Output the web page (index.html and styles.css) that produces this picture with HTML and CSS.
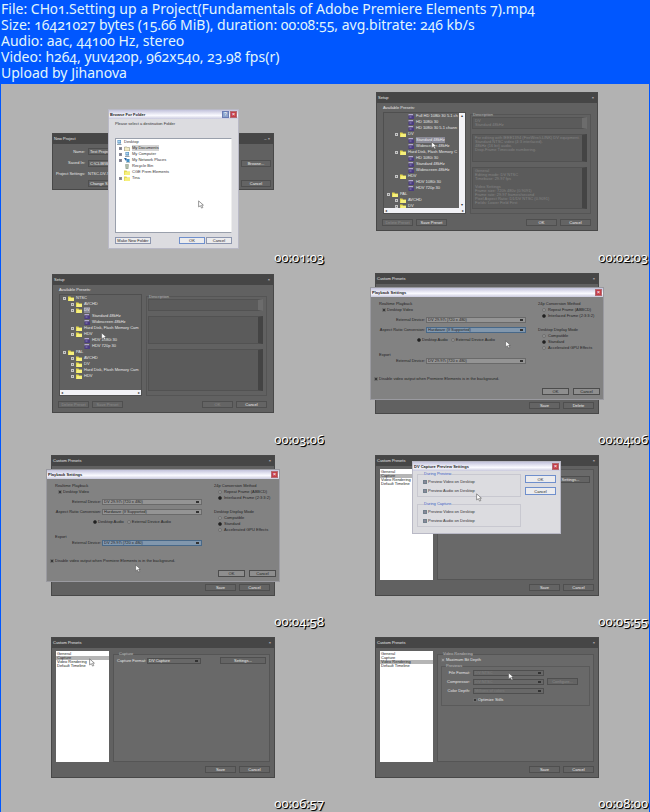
FILE: index.html
```html
<!DOCTYPE html>
<html lang="en">
<head>
<meta charset="utf-8">
<title>CH01.Setting up a Project</title>
<link rel="stylesheet" href="styles.css">
</head>
<body>
<svg width="0" height="0" class="defs" aria-hidden="true">
  <symbol id="folder" viewBox="0 0 12 10"><path d="M0 1h5l1 2h6v7H0z" fill="#e4d850"/><path d="M2 4h10v6H1z" fill="#f6f07c"/></symbol>
  <symbol id="paper" viewBox="0 0 12 10"><path d="M1 2h5l1 1h4v7H1z" fill="#f2ecc4" stroke="#8a8468"/></symbol>
  <symbol id="computer" viewBox="0 0 12 10"><path d="M3 0h7v7H3z" fill="#4f86b8"/><path d="M4 1h5v4H4z" fill="#a8d4ee"/><path d="M2 8h9v2H2z" fill="#97a4aa"/></symbol>
  <symbol id="network" viewBox="0 0 12 10"><path d="M5 2h6v6H5z" fill="#3f8fc4"/><path d="M0 0h5v5H3z" fill="#265fa0"/><path d="M4 9h8v1H4z" fill="#70868e"/></symbol>
  <symbol id="bin" viewBox="0 0 12 10"><path d="M3 1h6l-1 9H4z" fill="#b5c2b0" stroke="#7d8c7b"/></symbol>
  <symbol id="clip" viewBox="0 0 12 10"><path d="M1 0h9v3H1z" fill="#b3a9d0"/><path d="M1 3h11v7H1z" fill="#4b3d80"/><path d="M3 5h4v2H3z" fill="#8d80bd"/></symbol>
  <symbol id="pointer" viewBox="0 0 10 14"><path d="M1 1v10l3-2 2 4 2-1-2-4h3z" fill="#fff" stroke="#555"/></symbol>
</svg>

<header class="info">
  <p>File: CH01.Setting up a Project(Fundamentals of Adobe Premiere Elements 7).mp4</p>
  <p>Size: 16421027 bytes (15.66 MiB), duration: 00:08:55, avg.bitrate: 246 kb/s</p>
  <p>Audio: aac, 44100 Hz, stereo</p>
  <p>Video: h264, yuv420p, 962x540, 23.98 fps(r)</p>
  <p>Upload by Jihanova</p>
</header>

<main class="sheet">
  <section class="shot">
    <div class="window project">
      <div class="bar"><span>New Project</span><span>– ×</span></div>
      <div class="project-form">
        <label for="name">Name:</label><input id="name" value="Test Project"><span></span>
        <label for="saved">Saved In:</label><input id="saved" value="C:\CLIB\Work"><button>Browse...</button>
        <span class="right">Project Settings:</span><span>NTSC-DV-S</span><span></span>
        <span></span><button class="change">Change S</button><button>Cancel</button>
      </div>
    </div>
    <div class="window light browse">
      <div class="bar"><b>Browse For Folder</b><span class="keys"><button class="help" aria-label="Help">?</button><button class="close" aria-label="Close">×</button></span></div>
      <div class="browse-body">
        <p>Please select a destination Folder</p>
        <ul class="tree places">
          <li><svg><use href="#computer"/></svg>Desktop</li>
          <li class="l1"><i></i><svg><use href="#paper"/></svg><mark>My Documents</mark></li>
          <li class="l1"><i></i><svg><use href="#computer"/></svg>My Computer</li>
          <li class="l1"><i></i><svg><use href="#network"/></svg>My Network Places</li>
          <li class="l1"><i class="none"></i><svg><use href="#bin"/></svg>Recycle Bin</li>
          <li class="l1"><i class="none"></i><svg><use href="#folder"/></svg>CGE Prem Elements</li>
          <li class="l1"><i></i><svg><use href="#folder"/></svg>Tina</li>
        </ul>
        <div class="actions"><button class="wide">Make New Folder</button><button class="default">OK</button><button>Cancel</button></div>
      </div>
    </div>
    <svg class="pointer p1"><use href="#pointer"/></svg>
    <time>00:01:03</time>
  </section>

  <section class="shot">
    <div class="window setup">
      <div class="bar"><span>Setup</span><span>×</span></div>
      <div class="setup-body">
        <p>Available Presets:</p>
        <div class="panes">
          <div class="presets both">
            <ul class="tree">
              <li class="l3"><svg><use href="#clip"/></svg>Full HD 1080i 30 5.1 ch</li>
              <li class="l3"><svg><use href="#clip"/></svg>HD 1080i 30</li>
              <li class="l3"><svg><use href="#clip"/></svg>HD 1080i 30 5.1 chann</li>
              <li class="l2"><i></i><svg><use href="#folder"/></svg>DV</li>
              <li class="l3"><svg><use href="#clip"/></svg><mark>Standard 48kHz</mark></li>
              <li class="l3"><svg><use href="#clip"/></svg>Widescreen 48kHz</li>
              <li class="l2"><i></i><svg><use href="#folder"/></svg>Hard Disk, Flash Memory C</li>
              <li class="l3"><svg><use href="#clip"/></svg>HD 1080i 30</li>
              <li class="l3"><svg><use href="#clip"/></svg>Standard 48kHz</li>
              <li class="l3"><svg><use href="#clip"/></svg>Widescreen 48kHz</li>
              <li class="l2"><i></i><svg><use href="#folder"/></svg>HDV</li>
              <li class="l3"><svg><use href="#clip"/></svg>HDV 1080i 30</li>
              <li class="l3"><svg><use href="#clip"/></svg>HDV 720p 30</li>
              <li class="l1"><i></i><svg><use href="#folder"/></svg>PAL</li>
              <li class="l2"><i></i><svg><use href="#folder"/></svg>AVCHD</li>
              <li class="l2"><i></i><svg><use href="#folder"/></svg>DV</li>
            </ul>
            <div class="vscroll"><span>▴</span><span>▾</span></div>
            <div class="hscroll"><span>◂</span><span>▸</span></div>
          </div>
          <fieldset class="description"><legend>Description</legend>
            <div class="memo short pale">DV<br>Standard 48kHz</div>
            <div class="memo mid">For editing with IEEE1394 (FireWire/i.LINK) DV equipment.<br>Standard NTSC video (4:3 interlaced).<br>48kHz (16 bit) audio.<br>Drop-Frame Timecode numbering.</div>
            <div class="memo tall low">General<br>Editing mode: DV NTSC<br>Timebase: 29.97 fps<br><br>Video Settings<br>Frame size: 720h 480v (0.9091)<br>Frame rate: 29.97 frames/second<br>Pixel Aspect Ratio: D1/DV NTSC (0.9091)<br>Fields: Lower Field First</div>
          </fieldset>
        </div>
        <div class="actions"><button disabled>Delete Preset</button><button>Save Preset</button><button class="push">OK</button><button>Cancel</button></div>
      </div>
    </div>
    <svg class="pointer p2"><use href="#pointer"/></svg>
    <time>00:02:03</time>
  </section>

  <section class="shot">
    <div class="window setup">
      <div class="bar"><span>Setup</span><span>×</span></div>
      <div class="setup-body">
        <p>Available Presets:</p>
        <div class="panes">
          <div class="presets">
            <ul class="tree">
              <li class="l1"><i></i><svg><use href="#folder"/></svg>NTSC</li>
              <li class="l2"><i></i><svg><use href="#folder"/></svg>AVCHD</li>
              <li class="l2"><i></i><svg><use href="#folder"/></svg><mark>DV</mark></li>
              <li class="l3"><svg><use href="#clip"/></svg>Standard 48kHz</li>
              <li class="l3"><svg><use href="#clip"/></svg>Widescreen 48kHz</li>
              <li class="l2"><i></i><svg><use href="#folder"/></svg>Hard Disk, Flash Memory Cam</li>
              <li class="l2"><i></i><svg><use href="#folder"/></svg>HDV</li>
              <li class="l3"><svg><use href="#clip"/></svg>HDV 1080i 30</li>
              <li class="l3"><svg><use href="#clip"/></svg>HDV 720p 30</li>
              <li class="l1"><i></i><svg><use href="#folder"/></svg>PAL</li>
              <li class="l2"><i></i><svg><use href="#folder"/></svg>AVCHD</li>
              <li class="l2"><i></i><svg><use href="#folder"/></svg>DV</li>
              <li class="l2"><i></i><svg><use href="#folder"/></svg>Hard Disk, Flash Memory Cam</li>
              <li class="l2"><i></i><svg><use href="#folder"/></svg>HDV</li>
            </ul>
            <div class="hscroll"><span>◂</span><span>▸</span></div>
          </div>
          <fieldset class="description"><legend>Description</legend>
            <div class="memo short pale"></div>
            <div class="memo mid"></div>
            <div class="memo tall"></div>
          </fieldset>
        </div>
        <div class="actions"><button disabled>Delete Preset</button><button disabled>Save Preset</button><button class="push" disabled>OK</button><button>Cancel</button></div>
      </div>
    </div>
    <svg class="pointer p3"><use href="#pointer"/></svg>
    <time>00:03:06</time>
  </section>

  <section class="shot">
    <div class="window custom">
      <div class="bar"><span>Custom Presets</span><span>×</span></div>
      <div class="custom-body"><div class="actions end"><button>Save</button><button>Delete</button></div></div>
    </div>
    <div class="window grey playback">
      <div class="bar"><b>Playback Settings</b><button class="close" aria-label="Close">×</button></div>
      <div class="playback-body">
        <div class="cols">
          <div class="devices">
            <h2>Realtime Playback</h2>
            <label class="in"><input type="checkbox" checked>Desktop Video</label>
            <div class="pick"><label for="a1">External Device:</label><select id="a1"><option>DV 29.97i (720 x 480)</option></select></div>
            <div class="pick"><label for="a2">Aspect Ratio Conversion:</label><select id="a2" class="on"><option>Hardware (If Supported)</option></select></div>
            <div class="audio"><label><input type="radio" name="aud4" checked>Desktop Audio</label><label><input type="radio" name="aud4">External Device Audio</label></div>
            <h2 class="export">Export</h2>
            <div class="pick"><label for="a3">External Device:</label><select id="a3"><option>DV 29.97i (720 x 480)</option></select></div>
          </div>
          <div class="modes">
            <h2>24p Conversion Method</h2>
            <label><input type="radio" name="m4">Repeat Frame (ABBCD)</label>
            <label><input type="radio" name="m4" checked>Interlaced Frame (2:3:3:2)</label>
            <h2 class="second">Desktop Display Mode</h2>
            <label><input type="radio" name="d4">Compatible</label>
            <label><input type="radio" name="d4" checked>Standard</label>
            <label><input type="radio" name="d4">Accelerated GPU Effects</label>
          </div>
        </div>
        <label class="off"><input type="checkbox" checked>Disable video output when Premiere Elements is in the background.</label>
        <div class="actions end"><button>OK</button><button>Cancel</button></div>
      </div>
    </div>
    <svg class="pointer p4"><use href="#pointer"/></svg>
    <time>00:04:06</time>
  </section>

  <section class="shot">
    <div class="window custom">
      <div class="bar"><span>Custom Presets</span><span>×</span></div>
      <div class="custom-body"><div class="actions end"><button>Save</button><button>Cancel</button></div></div>
    </div>
    <div class="window grey playback">
      <div class="bar"><b>Playback Settings</b><button class="close" aria-label="Close">×</button></div>
      <div class="playback-body">
        <div class="cols">
          <div class="devices">
            <h2>Realtime Playback</h2>
            <label class="in"><input type="checkbox" checked>Desktop Video</label>
            <div class="pick"><label for="b1">External Device:</label><select id="b1"><option>DV 29.97i (720 x 480)</option></select></div>
            <div class="pick"><label for="b2">Aspect Ratio Conversion:</label><select id="b2"><option>Hardware (If Supported)</option></select></div>
            <div class="audio"><label><input type="radio" name="aud5" checked>Desktop Audio</label><label><input type="radio" name="aud5">External Device Audio</label></div>
            <h2 class="export">Export</h2>
            <div class="pick"><label for="b3">External Device:</label><select id="b3" class="on"><option>DV 29.97i (720 x 480)</option></select></div>
          </div>
          <div class="modes">
            <h2>24p Conversion Method</h2>
            <label><input type="radio" name="m5">Repeat Frame (ABBCD)</label>
            <label><input type="radio" name="m5" checked>Interlaced Frame (2:3:3:2)</label>
            <h2 class="second">Desktop Display Mode</h2>
            <label><input type="radio" name="d5">Compatible</label>
            <label><input type="radio" name="d5" checked>Standard</label>
            <label><input type="radio" name="d5">Accelerated GPU Effects</label>
          </div>
        </div>
        <label class="off"><input type="checkbox" checked>Disable video output when Premiere Elements is in the background.</label>
        <div class="actions end"><button>OK</button><button>Cancel</button></div>
      </div>
    </div>
    <svg class="pointer p5"><use href="#pointer"/></svg>
    <time>00:04:58</time>
  </section>

  <section class="shot">
    <div class="window custom">
      <div class="bar"><span>Custom Presets</span><span>×</span></div>
      <div class="custom-body">
        <div class="split">
          <ul class="sections"><li>General</li><li class="sel">Capture</li><li>Video Rendering</li><li>Default Timeline</li></ul>
          <div class="panel covered"><button>Settings...</button></div>
        </div>
        <div class="actions end"><button>Save</button><button>Cancel</button></div>
      </div>
    </div>
    <div class="window light preview">
      <div class="bar"><b>DV Capture Preview Settings</b><button class="close" aria-label="Close">×</button></div>
      <div class="preview-body">
        <div class="groups">
          <fieldset><legend>During Preview</legend>
            <label><input type="checkbox" checked>Preview Video on Desktop</label>
            <label><input type="checkbox" checked>Preview Audio on Desktop</label>
          </fieldset>
          <fieldset><legend>During Capture</legend>
            <label><input type="checkbox" checked>Preview Video on Desktop</label>
            <label><input type="checkbox" checked>Preview Audio on Desktop</label>
          </fieldset>
        </div>
        <div class="stack"><button class="default">OK</button><button class="default">Cancel</button></div>
      </div>
    </div>
    <svg class="pointer p6"><use href="#pointer"/></svg>
    <time>00:05:55</time>
  </section>

  <section class="shot">
    <div class="window custom">
      <div class="bar"><span>Custom Presets</span><span>×</span></div>
      <div class="custom-body">
        <div class="split">
          <ul class="sections"><li>General</li><li class="sel">Capture</li><li>Video Rendering</li><li>Default Timeline</li></ul>
          <fieldset class="panel"><legend>Capture</legend>
            <div class="format"><label for="e1">Capture Format:</label><select id="e1"><option>DV Capture</option></select><button>Settings...</button></div>
          </fieldset>
        </div>
        <div class="actions end"><button>Save</button><button>Cancel</button></div>
      </div>
    </div>
    <svg class="pointer p7"><use href="#pointer"/></svg>
    <time>00:06:57</time>
  </section>

  <section class="shot">
    <div class="window custom">
      <div class="bar"><span>Custom Presets</span><span>×</span></div>
      <div class="custom-body">
        <div class="split">
          <ul class="sections"><li>General</li><li>Capture</li><li class="sel">Video Rendering</li><li>Default Timeline</li></ul>
          <fieldset class="panel"><legend>Video Rendering</legend>
            <label class="depth"><input type="checkbox">Maximum Bit Depth</label>
            <fieldset class="previews"><legend>Previews</legend>
              <div class="render">
                <label for="f1">File Format:</label><select id="f1" class="dim"><option>DV NTSC</option></select><span></span>
                <label for="f2">Compressor:</label><select id="f2" class="dim"><option>DV NTSC</option></select><button disabled>Configure...</button>
                <label for="f3">Color Depth:</label><select id="f3" class="dim"><option>Millions of colors</option></select><span></span>
                <span></span><label class="still"><input type="checkbox" checked>Optimize Stills</label><span></span>
              </div>
            </fieldset>
          </fieldset>
        </div>
        <div class="actions end"><button>Save</button><button>Cancel</button></div>
      </div>
    </div>
    <svg class="pointer p8"><use href="#pointer"/></svg>
    <time>00:08:00</time>
  </section>
</main>
</body>
</html>
```
FILE: styles.css
```css
* { box-sizing: border-box; }
body { margin: 0; background: #0057ff; min-height: 100vh; font-family: "Liberation Sans Narrow", "Liberation Sans", sans-serif; }
.defs { position: absolute; }
p, h2, ul, li, fieldset, legend { margin: 0; padding: 0; font: inherit; list-style: none; }
fieldset { min-width: 0; }

.info { padding: 1px 1px 3px; color: #e2f6fb; font-family: "Noto Sans", sans-serif; font-size: 14px; line-height: 16px; font-variant-numeric: oldstyle-nums; white-space: nowrap; }

.sheet { display: grid; grid-template-columns: 1fr 1fr; grid-auto-rows: 182px; padding: 0 1px; }
.shot { position: relative; overflow: hidden; background: #b2b2b2; font-size: 4px; line-height: 6px; color: #e6e6e6; }
.shot time { position: absolute; right: 1px; bottom: 0; color: #fff; font: 13px/18px "Noto Sans", sans-serif; font-variant-numeric: oldstyle-nums; text-shadow: 1px 1px 1px #000, 1px 1px 0 #222; }

/* Windows */
.window { position: absolute; display: flex; flex-direction: column; border: 1px solid #484848; background: #616161; white-space: nowrap; }
.bar { display: flex; justify-content: space-between; align-items: center; height: 10px; padding: 0 3px 0 1px; background: #464646; }
.project { left: 51px; top: 49px; width: 222px; height: 57px; }
.browse { left: 107px; top: 25px; width: 131px; height: 140px; }
.setup { left: 51px; top: 8px; width: 222px; height: 139px; }
.custom { left: 50px; top: 7px; width: 224px; height: 141px; }
.playback { left: 45px; top: 21px; width: 234px; height: 113px; }
.preview { left: 87px; top: 13px; width: 149px; height: 73px; }
.light { border-color: #b9b9c6; background: #dcdce0; color: #333; }
.grey { border-color: #9a9aa0; background: #828282; color: #222; }
.light .bar, .grey .bar { height: 9px; padding: 0 1px; background: linear-gradient(#c3c3dc, #fafaff 60%, #c9c9dd); color: #222; }

/* Controls */
button, input, select { margin: 0; border: 1px solid #4f4f4f; padding: 0 1px; background: #646464; color: #eee; font: inherit; line-height: 5px; height: 7px; min-width: 0; border-radius: 0; }
button:disabled { color: #8c8c8c; opacity: 1; }
select { appearance: none; height: 6px; line-height: 4px; background: linear-gradient(90deg, #333, #333) right 2px center / 3px 2px no-repeat, #686868; }
select.dim { color: #7c7c7c; }
input[type="checkbox"], input[type="radio"] { appearance: none; flex: none; width: 4px; height: 4px; padding: 0; border: 1px solid #707070; background: #989898; }
input[type="radio"] { border-radius: 50%; }
input[type="checkbox"]:checked { background: #383838; }
input[type="radio"]:checked { background: #161616; border-color: #3c3c3c; }
label { display: flex; align-items: center; gap: 1px; }
.light button { border-color: #8d96ae; background: #ececee; color: #222; }
.light button.default { border-color: #6f8fcc; }
.grey button { border-color: #4c4c4c; background: #8e8e8e; color: #222; }
.grey select { border-color: #6a6a6a; background-color: #949494; color: #222; }
.grey select.on { border-color: #486888; background-color: #8197ad; }
.window .keys { display: flex; gap: 1px; }
.window .close, .window .help { width: 7px; height: 7px; padding: 0; border-color: #b46a70; background: #c43c48; color: #fff; font-size: 6px; }
.window .help { border-color: #6a7cb4; background: #8ea4cc; font-size: 5px; }
.actions { display: flex; gap: 3px; }
.actions button { width: 31px; }
.actions .push { margin-left: auto; }
.end { justify-content: flex-end; }

/* New project */
.project-form { display: grid; grid-template-columns: 31px 1fr 30px; grid-template-rows: 11px 10px 9px 8px; gap: 1px 3px; align-items: center; padding: 2px 2px 0 1px; }
.project-form label, .right { justify-content: flex-end; text-align: right; }
.change { text-align: left; }

/* Folder dialog */
.browse-body { padding: 2px 6px 0; }
.browse-body p { height: 17px; }
.places { height: 95px; margin-bottom: 4px; border: 1px solid #9aa0ac; border-right-color: #eee; background: #fff; }
.places mark { background: #d4d4d4; color: #222; }
.browse .wide { width: 36px; margin-right: auto; }
.browse .actions button:not(.wide) { width: 26px; }
.browse .actions { gap: 1px; }

/* Trees */
.tree { overflow: hidden; min-width: 0; }
.tree li { display: flex; align-items: center; gap: 2px; height: 6px; }
.tree svg { flex: none; width: 6px; height: 5px; }
.tree i { flex: none; width: 3px; height: 3px; border: 1px solid #c4c4c4; background: #777; }
.tree .none { visibility: hidden; }
.places .l1 { padding-left: 3px; }
.places .l1 i { border-color: #8b8b9b; }
mark { background: #8a8a96; color: #eee; }
.presets .l1 { padding-left: 3px; }
.presets .l2 { padding-left: 11px; }
.presets .l3 { padding-left: 24px; }

/* Setup */
.setup-body { padding: 2px 6px 0 5px; }
.setup-body > p { padding-left: 1px; }
.panes { display: flex; gap: 4px; height: 102px; margin: 1px 0 5px; }
.presets { display: grid; grid-template-columns: 1fr auto; grid-template-rows: 1fr 5px; flex: none; width: 83px; height: 102px; margin-left: 1px; border: 1px solid #4f4f4f; }
.vscroll, .hscroll { display: flex; justify-content: space-between; background: #f2f2f6; color: #333; }
.vscroll { flex-direction: column; align-items: center; width: 6px; }
.hscroll { grid-column: 1 / -1; align-items: center; padding: 0 1px; }
.description { flex: 1; display: flex; flex-direction: column; border: 1px solid #555; padding: 0 3px 2px 1px; color: #b0b0b0; }
.description legend { margin-left: 1px; line-height: 5px; }
.memo { flex: none; overflow: hidden; border: 1px solid #525252; border-right: 5px solid #444; background: #5b5b5b; color: #848484; line-height: 4px; padding: 1px 2px; margin-bottom: 5px; }
.memo.pale { border-right-color: #6c6c6c; }
.short { height: 12px; }
.mid { height: 28px; }
.tall { height: 42px; margin-bottom: 0; }

/* Playback */
.playback-body { padding: 4px 3px 0; }
.cols { display: flex; gap: 12px; height: 75px; padding: 0 5px; }
.devices { width: 147px; }
.in { padding-left: 3px; margin-bottom: 4px; }
.pick { display: grid; grid-template-columns: 46px 1fr; gap: 1px; margin-bottom: 4px; }
.pick label { justify-content: flex-end; }
.audio { display: flex; gap: 3px; padding-left: 38px; }
.export { margin-top: 9px; }
.modes label { padding-left: 4px; gap: 2px; }
.second { margin-top: 8px; }
.playback .actions { gap: 4px; margin-top: 6px; }
.playback .actions button { width: 27px; }

/* Custom presets */
.custom-body { display: flex; flex-direction: column; flex: 1; justify-content: flex-end; gap: 4px; padding: 3px 4px 4px; }
.split { display: flex; gap: 4px; height: 111px; }
.sections { width: 53px; padding: 1px 0; background: #fff; color: #222; line-height: 4px; }
.sections li { height: 4px; padding-left: 1px; }
.sel { background: #b5b5b5; }
.panel { flex: 1; border: 1px solid #555; padding: 0 3px; background: #696969; }
.panel legend { margin-left: 2px; color: #b8b8b8; }
.covered { display: flex; align-items: flex-start; justify-content: flex-end; padding-top: 6px; }
.covered button { width: 46px; padding-left: 8px; }
.format { display: grid; grid-template-columns: 29px 54px 1fr; align-items: center; gap: 1px; }
.format button { justify-self: end; width: 46px; }
.previews { border: 1px solid #5a5a5a; padding: 0 2px; }
.render { display: grid; grid-template-columns: 26px 71px 31px; grid-auto-rows: 7px; gap: 2px 3px; align-items: center; padding-bottom: 2px; }
.render > label:not(.still) { justify-content: flex-end; }

/* Capture preview */
.preview-body { display: flex; gap: 4px; padding: 0 4px; }
.groups { flex: 1; display: flex; flex-direction: column; gap: 4px; }
.groups fieldset { border: 1px solid #c8c8d0; padding: 0 5px 1px; }
.groups legend { margin-left: 1px; color: #3a5cc4; }
.groups label { height: 9px; }
.groups input { border-color: #71808c; background: #eee; }
.groups input:checked { background: #889; }
.stack { display: flex; flex-direction: column; gap: 4px; padding-top: 4px; }
.stack button { width: 31px; height: 8px; }

/* Pointers */
.pointer { position: absolute; width: 6px; height: 9px; }
.p1 { left: 197px; top: 116px; }
.p2 { left: 106px; top: 57px; }
.p3 { left: 100px; top: 66px; }
.p4 { left: 180px; top: 74px; }
.p5 { left: 134px; top: 116px; }
.p6 { left: 151px; top: 45px; }
.p7 { left: 88px; top: 28px; }
.p8 { left: 183px; top: 42px; }
```
